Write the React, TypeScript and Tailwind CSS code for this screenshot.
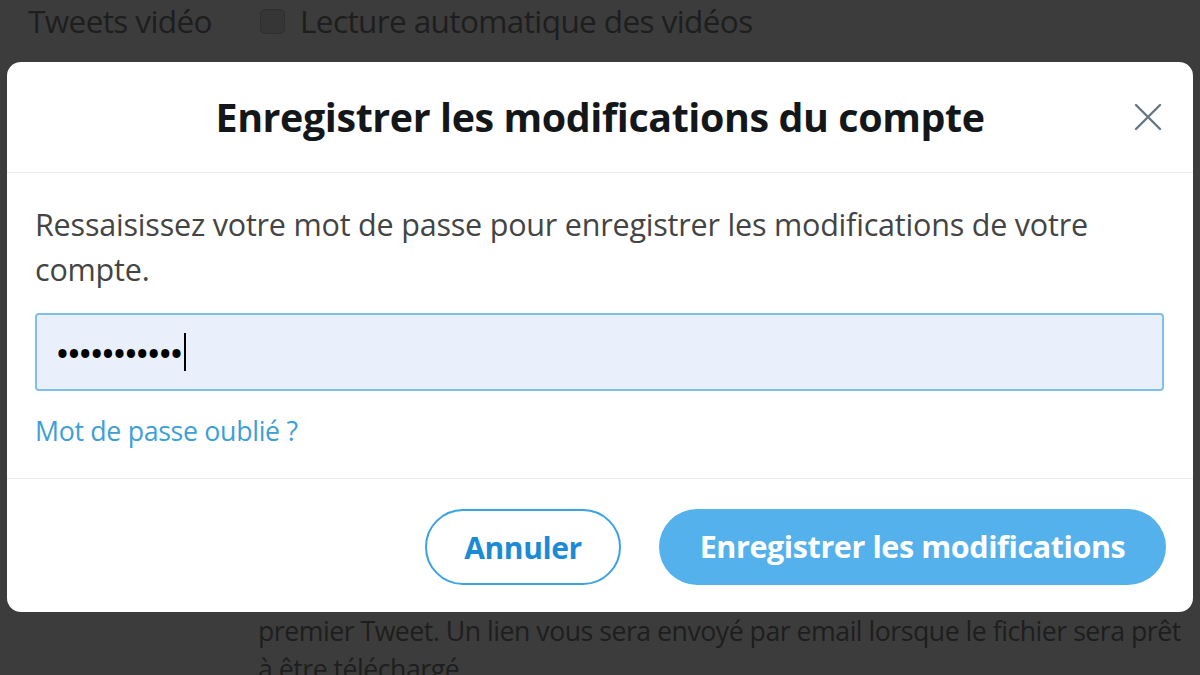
import { useState } from 'react';

const font = { fontFamily: '"Open Sans", "Noto Sans", sans-serif' };

function CloseIcon() {
  return (
    <svg width="32" height="32" viewBox="0 0 24 24" fill="none" stroke="#657786" strokeWidth="1.8" strokeLinecap="round">
      <path d="M3 3l18 18M21 3L3 21" />
    </svg>
  );
}

export default function App() {
  const [password] = useState('•••••••••••');

  return (
    <div className="h-[675px] w-[1200px] overflow-hidden bg-[#3c3c3c]" style={font}>
      {/* Fond : paramètres derrière la fenêtre */}
      <div className="flex h-[62px] items-start pl-[28px] text-[31.5px] leading-[42px] tracking-[-0.6px] text-[#1e1e1e]">
        <span>Tweets vidéo</span>
        <span className="ml-[48px] flex items-center gap-[15px]">
          <span className="block h-[25px] w-[25px] rounded-[5px] border border-[#2f2f2f] bg-[#363636]" />
          <span>Lecture automatique des vidéos</span>
        </span>
      </div>

      {/* Fenêtre modale */}
      <div className="mx-[7px] rounded-[14px] bg-white">
        <div className="grid h-[111px] grid-cols-[1fr_auto_1fr] items-center border-b border-[#e6ecf0]">
          <div />
          <h1 className="pt-[2px] text-[39.4px] font-bold tracking-[-0.4px] text-[#14171a]">
            Enregistrer les modifications du compte
          </h1>
          <div className="flex justify-end pr-[25px]">
            <button className="flex h-[40px] w-[40px] items-center justify-center">
              <CloseIcon />
            </button>
          </div>
        </div>

        <div className="border-b border-[#e6ecf0] px-[28px] pb-[29px] pt-[29px]">
          <p className="pr-[20px] text-[30.5px] leading-[45px] tracking-[-0.2px] text-[#444]">
            Ressaisissez votre mot de passe pour enregistrer les modifications de votre compte.
          </p>
          <div className="mt-[21px] mr-[1px] flex h-[78px] items-center rounded-[4px] border-2 border-[#80bfe8] bg-[#e9f0fc] pl-[20px]">
            <span className="text-[29px] font-bold leading-none tracking-[0.5px] text-black">{password}</span>
            <span className="ml-[2px] block h-[38px] w-[2px] bg-black" />
          </div>
          <a href="#" className="mt-[22px] block text-[26.7px] leading-[36px] tracking-[-0.3px] text-[#3d9fd6]">
            Mot de passe oublié ?
          </a>
        </div>

        <div className="flex justify-end gap-[38px] px-[27px] pb-[27px] pt-[30px]">
          <button className="h-[76px] w-[196px] rounded-full border-2 border-[#3aa3e3] text-[30px] font-bold tracking-[-0.4px] text-[#1b8bd6]">
            Annuler
          </button>
          <button className="h-[76px] w-[507px] rounded-full bg-[#55b1ec] text-[30.5px] font-bold tracking-[-0.4px] text-white">
            Enregistrer les modifications
          </button>
        </div>
      </div>

      {/* Fond : texte sous la fenêtre */}
      <div className="pl-[258px] text-[26.7px] leading-[38px] tracking-[-0.5px] text-[#1e1e1e]">
        <p>premier Tweet. Un lien vous sera envoyé par email lorsque le fichier sera prêt</p>
        <p>à être téléchargé.</p>
      </div>
    </div>
  );
}
